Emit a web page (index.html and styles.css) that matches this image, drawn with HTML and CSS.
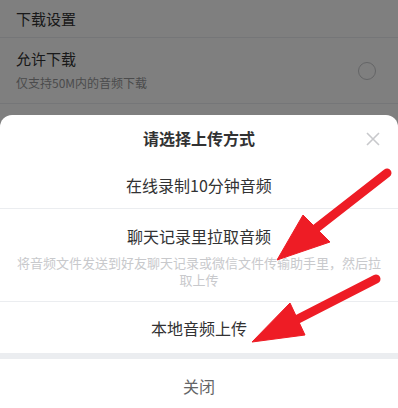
FILE: index.html
```html
<!DOCTYPE html>
<html lang="zh">
<head>
<meta charset="utf-8">
<link rel="stylesheet" href="styles.css">
</head>
<body>
<div class="page">
  <div class="group-title">下载设置</div>
  <div class="cell">
    <div class="cell-text">
      <div class="cell-title">允许下载</div>
      <div class="cell-label">仅支持50M内的音频下载</div>
    </div>
    <span class="radio"></span>
  </div>
</div>
<div class="overlay"></div>
<div class="sheet">
  <div class="sheet-header">
    请选择上传方式
    <svg class="close" width="14" height="14" viewBox="0 0 14 14"><path d="M1 1L13 13M13 1L1 13" stroke="#c8c9cc" stroke-width="1.6" fill="none"/></svg>
  </div>
  <div class="item item-short">在线录制10分钟音频</div>
  <div class="item item-tall">
    <div class="item-name">聊天记录里拉取音频</div>
    <div class="item-sub">将音频文件发送到好友聊天记录或微信文件传输助手里，然后拉取上传</div>
  </div>
  <div class="item item-last">本地音频上传</div>
  <div class="gap"></div>
  <div class="cancel">关闭</div>
</div>
<svg class="arrows" width="398" height="408" viewBox="0 0 398 408">
  <g fill="#ee1c25" stroke="#ee1c25">
    <line x1="387" y1="173" x2="314" y2="230" stroke-width="9" stroke-linecap="round"/>
    <polygon points="277,260 303,215 330,242" stroke-width="1" stroke-linejoin="round"/>
    <line x1="376" y1="279" x2="296" y2="320" stroke-width="9" stroke-linecap="round"/>
    <polygon points="252,342 290,303 305,335" stroke-width="1" stroke-linejoin="round"/>
  </g>
</svg>
</body>
</html>
```
FILE: styles.css
```css
* { box-sizing: border-box; }
html, body {
  margin: 0;
  padding: 0;
  width: 398px;
  height: 408px;
  overflow: hidden;
  background: #fff;
  font-family: "Noto Sans CJK SC", "Liberation Sans", sans-serif;
  color: #323233;
}
body { position: relative; }
.page { background: #fff; }
.group-title {
  height: 38px;
  padding: 0 16px;
  font-size: 15px;
  line-height: 38px;
  border-bottom: 1px solid #ebedf0;
}
.cell {
  display: flex;
  align-items: center;
  justify-content: space-between;
  height: 66px;
  padding: 0 22px 0 16px;
  border-bottom: 1px solid #ebedf0;
}
.cell-title { font-size: 15px; line-height: 22px; margin-top: -2px; }
.cell-label { font-size: 12px; line-height: 18px; color: #969799; margin-top: 4px; }
.radio {
  width: 18px;
  height: 18px;
  border: 1px solid #c8c9cc;
  border-radius: 50%;
}
.overlay {
  position: absolute;
  inset: 0;
  background: rgba(0, 0, 0, 0.5);
}
.sheet {
  position: absolute;
  left: 0;
  right: 0;
  top: 115px;
  bottom: 0;
  background: #fff;
  border-radius: 12px 12px 0 0;
  overflow: hidden;
  text-align: center;
}
.sheet-header {
  position: relative;
  height: 47px;
  line-height: 46px;
  font-size: 16px;
  font-weight: bold;
}
.close {
  position: absolute;
  right: 18px;
  top: 17px;
}
.item {
  font-size: 16px;
  border-bottom: 1px solid #ebedf0;
}
.item-short { height: 47px; line-height: 47px; }
.item-tall { padding: 15px 12px 0; height: 93px; }
.item-name { line-height: 24px; }
.item-sub {
  margin-top: 6px;
  font-size: 13px;
  line-height: 17px;
  color: #c8c9cc;
}
.item-last { height: 51px; line-height: 52px; border-bottom: none; }
.gap { height: 6px; background: #ebedf0; }
.cancel { height: 54px; line-height: 54px; font-size: 16px; color: #646566; }
.arrows { position: absolute; left: 0; top: 0; }
```
